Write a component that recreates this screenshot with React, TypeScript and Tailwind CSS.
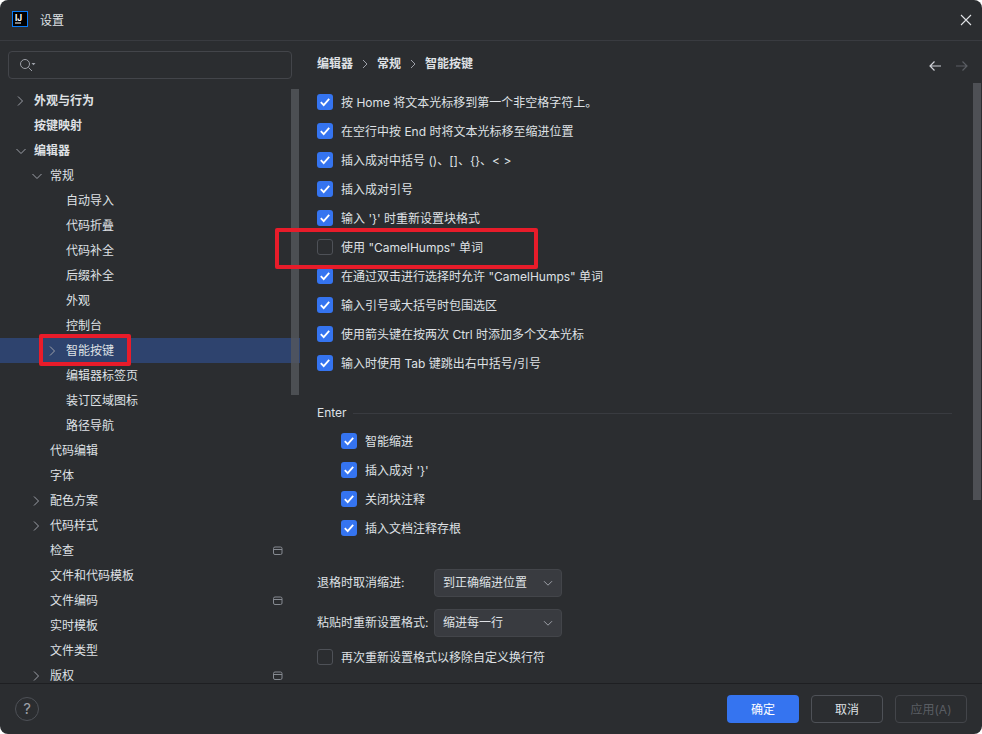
const FONT = "font-['Inter','Noto_Sans_CJK_SC',sans-serif]";

type TreeRow = {
  label: string;
  level: number;
  arrow?: "right" | "down";
  bold?: boolean;
  selected?: boolean;
  project?: boolean;
};

const TREE: TreeRow[] = [
  { label: "外观与行为", level: 0, arrow: "right", bold: true },
  { label: "按键映射", level: 0, bold: true },
  { label: "编辑器", level: 0, arrow: "down", bold: true },
  { label: "常规", level: 1, arrow: "down" },
  { label: "自动导入", level: 2 },
  { label: "代码折叠", level: 2 },
  { label: "代码补全", level: 2 },
  { label: "后缀补全", level: 2 },
  { label: "外观", level: 2 },
  { label: "控制台", level: 2 },
  { label: "智能按键", level: 2, arrow: "right", selected: true },
  { label: "编辑器标签页", level: 2 },
  { label: "装订区域图标", level: 2 },
  { label: "路径导航", level: 2 },
  { label: "代码编辑", level: 1 },
  { label: "字体", level: 1 },
  { label: "配色方案", level: 1, arrow: "right" },
  { label: "代码样式", level: 1, arrow: "right" },
  { label: "检查", level: 1, project: true },
  { label: "文件和代码模板", level: 1 },
  { label: "文件编码", level: 1, project: true },
  { label: "实时模板", level: 1 },
  { label: "文件类型", level: 1 },
  { label: "版权", level: 1, arrow: "right", project: true },
];

const OPTIONS: [string, boolean][] = [
  ["按 Home 将文本光标移到第一个非空格字符上。", true],
  ["在空行中按 End 时将文本光标移至缩进位置", true],
  ["插入成对中括号 ()、[]、{}、< >", true],
  ["插入成对引号", true],
  ["输入 '}' 时重新设置块格式", true],
  ['使用 "CamelHumps" 单词', false],
  ['在通过双击进行选择时允许 "CamelHumps" 单词', true],
  ["输入引号或大括号时包围选区", true],
  ["使用箭头键在按两次 Ctrl 时添加多个文本光标", true],
  ["输入时使用 Tab 键跳出右中括号/引号", true],
];

const ENTER_OPTIONS = ["智能缩进", "插入成对 '}'", "关闭块注释", "插入文档注释存根"];

function Chevron({ dir }: { dir: "right" | "down" }) {
  return (
    <svg width="16" height="16" viewBox="0 0 16 16" fill="none" className="shrink-0">
      <path
        d={dir === "right" ? "M5 3.5 9.5 8 5 12.5" : "M3.5 6 8 10.5 12.5 6"}
        stroke="#9da0a8"
        strokeWidth="1"
      />
    </svg>
  );
}

function ProjectIcon() {
  return (
    <svg width="10" height="10" viewBox="0 0 10 10" fill="none" className="ml-auto mr-[17px] shrink-0">
      <rect x="0.5" y="1" width="8.5" height="7.5" rx="1.5" stroke="#868a91" />
      <path d="M1 3.5h8" stroke="#868a91" />
    </svg>
  );
}

function TreeItem({ row }: { row: TreeRow }) {
  const pad = row.level === 0 ? "pl-[13px]" : row.level === 1 ? "pl-[29px]" : "pl-[45px]";
  return (
    <div
      className={`flex h-[25px] shrink-0 items-center ${pad} ${row.selected ? "bg-[#2e436e]" : ""} ${row.bold ? "font-semibold" : ""}`}
    >
      <span className="flex w-[21px] shrink-0 items-center">
        {row.arrow && <Chevron dir={row.arrow} />}
      </span>
      <span>{row.label}</span>
      {row.project && <ProjectIcon />}
    </div>
  );
}

function Check({ checked }: { checked: boolean }) {
  if (!checked) {
    return <span className="h-4 w-4 shrink-0 rounded-[3px] border border-[#4e5157]" />;
  }
  return (
    <span className="flex h-4 w-4 shrink-0 items-center justify-center rounded-[3px] bg-[#3574f0]">
      <svg width="12" height="12" viewBox="0 0 12 12" fill="none">
        <path d="M1.8 6.2 4.7 9.2 10.2 2.9" stroke="#fff" strokeWidth="1.8" />
      </svg>
    </span>
  );
}

function CheckRow({ label, checked }: { label: string; checked: boolean }) {
  return (
    <div className="flex h-[29px] items-start gap-[8px] pt-[7px]">
      <Check checked={checked} />
      <span className="mt-px">{label}</span>
    </div>
  );
}

function Select({ label, value }: { label: string; value: string }) {
  return (
    <div className="flex h-[28px] items-center">
      <span className="w-[117px] shrink-0 whitespace-nowrap">{label}</span>
      <div className="flex h-[28px] w-[128px] items-center justify-between rounded-[4px] border border-[#43454a] bg-[#393b40] pl-[8px] pr-[7px]">
        <span>{value}</span>
        <svg width="12" height="12" viewBox="0 0 12 12" fill="none">
          <path d="M2 4.2 6 8.2 10 4.2" stroke="#9da0a8" strokeWidth="1" />
        </svg>
      </div>
    </div>
  );
}

function FooterButton({ label, kind }: { label: string; kind: "primary" | "normal" | "disabled" }) {
  const style =
    kind === "primary"
      ? "bg-[#3574f0] text-white"
      : kind === "normal"
        ? "border border-[#4e5157] text-[#dfe1e5]"
        : "border border-[#43454a] text-[#5a5d63]";
  return (
    <div className={`flex h-[28px] w-[72px] items-center justify-center rounded-[4px] pt-px ${style}`}>{label}</div>
  );
}

export default function App() {
  return (
    <div
      className={`relative flex h-[734px] w-[982px] flex-col overflow-hidden rounded-[8px] bg-[#2b2d30] text-[12px] leading-[16px] text-[#dfe1e5] ${FONT}`}
    >
      {/* Title bar */}
      <div className="flex h-[41px] shrink-0 items-center border-b border-[#393b40] pl-[12px] pr-[10px]">
        <svg width="16" height="16" viewBox="0 0 16 16" className="shrink-0 -translate-y-px">
          <rect x="0.5" y="0.5" width="15" height="15" fill="#000" stroke="#087cfa" />
          <rect x="3" y="11.5" width="6" height="1" fill="#fff" />
          <text x="3" y="10" fill="#fff" fontSize="8.25" fontWeight="700" fontFamily="Inter">
            IJ
          </text>
        </svg>
        <span className="ml-[12px] pt-px">设置</span>
        <svg width="12" height="12" viewBox="0 0 12 12" fill="none" className="ml-auto">
          <path d="M1 1 11 11M11 1 1 11" stroke="#dfe1e5" strokeWidth="1.1" />
        </svg>
      </div>

      <div className="flex min-h-0 flex-1">
        {/* Sidebar */}
        <div className="flex w-[300px] shrink-0 flex-col overflow-hidden">
          <div className="mx-[8px] mb-[9px] mt-[10px] flex h-[28px] shrink-0 items-center rounded-[4px] border border-[#43454a] pl-[9px]">
            <svg width="18" height="16" viewBox="0 0 18 16" fill="none">
              <circle cx="7" cy="7" r="4.5" stroke="#9da0a8" />
              <path d="M10.5 10.5 14 14" stroke="#9da0a8" />
              <path d="M13.5 6h4l-2 2.2z" fill="#9da0a8" />
            </svg>
          </div>
          {TREE.map((row) => (
            <TreeItem key={row.label} row={row} />
          ))}
        </div>

        {/* Content */}
        <div className="min-w-0 flex-1 overflow-hidden pl-[17px] pr-[30px]">
          <div className="flex h-[46px] items-center">
            <div className="flex items-center font-semibold">
              <span>编辑器</span>
              <span className="mx-[9px] flex w-[6px] justify-center">
                <svg width="6" height="10" viewBox="0 0 6 10" fill="none">
                  <path d="M1 1 5 5 1 9" stroke="#9da0a8" />
                </svg>
              </span>
              <span>常规</span>
              <span className="mx-[9px] flex w-[6px] justify-center">
                <svg width="6" height="10" viewBox="0 0 6 10" fill="none">
                  <path d="M1 1 5 5 1 9" stroke="#9da0a8" />
                </svg>
              </span>
              <span>智能按键</span>
            </div>
            <div className="ml-auto mr-[-17px] mt-[4px] flex items-center gap-[13px]">
              <svg width="14" height="14" viewBox="0 0 14 14" fill="none">
                <path d="M13 7H2M6.5 2.5 2 7l4.5 4.5" stroke="#ced0d6" strokeWidth="1.2" />
              </svg>
              <svg width="14" height="14" viewBox="0 0 14 14" fill="none">
                <path d="M1 7h11M7.5 2.5 12 7l-4.5 4.5" stroke="#5a5d63" strokeWidth="1.2" />
              </svg>
            </div>
          </div>

          <div>
            {OPTIONS.map(([label, checked]) => (
              <CheckRow key={label} label={label} checked={checked} />
            ))}
          </div>

          <div className="mt-[28px] flex h-[16px] items-center gap-[6px]">
            <span>Enter</span>
            <span className="h-px flex-1 bg-[#393b40]" />
          </div>

          <div className="mt-[5px] pl-[24px]">
            {ENTER_OPTIONS.map((label) => (
              <CheckRow key={label} label={label} checked />
            ))}
          </div>

          <div className="mt-[27px] flex flex-col gap-[12px]">
            <Select label="退格时取消缩进:" value="到正确缩进位置" />
            <Select label="粘贴时重新设置格式:" value="缩进每一行" />
          </div>
          <div className="mt-[5px]">
            <CheckRow label="再次重新设置格式以移除自定义换行符" checked={false} />
          </div>
        </div>
      </div>

      {/* Footer */}
      <div className="flex h-[51px] shrink-0 items-center justify-between border-t border-[#1e1f22] pl-[15px] pr-[15px]">
        <div className="flex h-[24px] w-[24px] items-center justify-center rounded-full border border-[#4e5157] text-[15px] text-[#9da0a8]">
          ?
        </div>
        <div className="flex gap-[12px]">
          <FooterButton label="确定" kind="primary" />
          <FooterButton label="取消" kind="normal" />
          <FooterButton label="应用(A)" kind="disabled" />
        </div>
      </div>

      {/* Overlay scrollbars */}
      <div className="absolute left-[291px] top-[89px] h-[306px] w-[8px] bg-[#55575c]/80" />
      <div className="absolute left-[973px] top-[83px] h-[417px] w-[8px] bg-[#4e5055]" />

      {/* Red annotations */}
      <div className="absolute left-[39px] top-[334px] h-[32px] w-[92px] rounded-[2px] border-[4px] border-[#e81c2a]" />
      <div className="absolute left-[275px] top-[228px] h-[41px] w-[263px] rounded-[2px] border-[4px] border-[#e81c2a]" />
    </div>
  );
}
